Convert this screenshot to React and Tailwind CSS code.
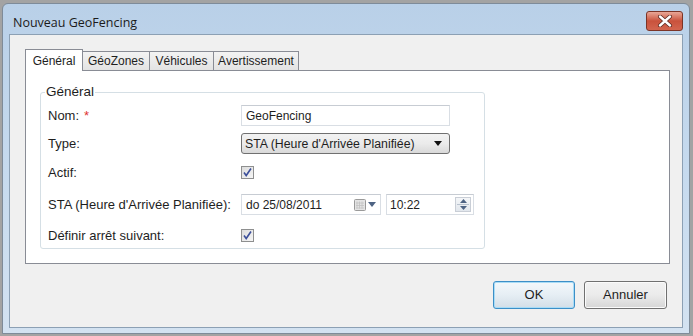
import React from "react";

const labelFont = { fontFamily: '"Liberation Sans", Arial, sans-serif' };

const Checkbox = () => (
  <div className="w-[13px] h-[13px] border border-[#8e8f8f] bg-gradient-to-br from-[#dcdcdc] to-[#f6f6f6] flex items-center justify-center">
    <svg width="11" height="11" viewBox="0 0 11 11">
      <path d="M2 5.5 L4.2 8.5 L9 1.5" fill="none" stroke="#3c4f9a" strokeWidth="1.6" />
    </svg>
  </div>
);

const Row = ({ label, required, className = "", children }) => (
  <div className={`flex items-center h-[21px] text-[12px] ${className}`}>
    <div className="w-[193px] shrink-0 flex items-center text-[13px]">
      <span>{label}</span>
      {required && <span className="text-[#e0322f] ml-[5px]">*</span>}
    </div>
    {children}
  </div>
);

const App = () => {
  const tabs = [
    { name: "Général", w: "w-[58px]", active: true },
    { name: "GéoZones", w: "w-[68px]" },
    { name: "Véhicules", w: "w-[65px]" },
    { name: "Avertissement", w: "w-[86px]" },
  ];

  return (
    <div className="w-[693px] h-[336px] bg-[#a3a3a3] pt-[3px] pl-[2px] pr-[3px] pb-[2px] overflow-hidden" style={labelFont}>
      <div className="h-full rounded-t-[6px] border border-[#7e8b99] bg-gradient-to-b from-[#b9d0e8] via-[#c6daee] to-[#d3e2f1] flex flex-col px-[6px] pb-[5px]">
        {/* Title bar */}
        <div className="h-[30px] flex items-center justify-between shrink-0">
          <span className="text-[12.5px] text-[#1b1b1b] ml-[4px] mt-[8px]" style={{ fontFamily: '"Open Sans", "Noto Sans", sans-serif' }}>
            Nouveau GeoFencing
          </span>
          <div className="w-[37px] h-[20px] mt-[3px] rounded-[3px] border border-[#7c3426] bg-gradient-to-b from-[#e8a797] via-[#c9523c] to-[#d2654f] flex items-center justify-center">
            <svg width="16" height="12" viewBox="0 0 16 12">
              <path d="M3 1.5 L13 10.5 M13 1.5 L3 10.5" stroke="#5c2a22" strokeWidth="4" strokeLinecap="round" />
              <path d="M3 1.5 L13 10.5 M13 1.5 L3 10.5" stroke="#ffffff" strokeWidth="2.4" strokeLinecap="round" />
            </svg>
          </div>
        </div>

        {/* Client area */}
        <div className="flex-1 bg-[#f0f0f0] border border-[#8ca0b4] flex flex-col pl-[15px] pr-[12px] pt-[14px] text-[12px] text-[#1e1e1e]">
          {/* Tabs */}
          <div className="flex items-end h-[21px]">
            {tabs.map((t) =>
              t.active ? (
                <div
                  key={t.name}
                  className={`${t.w} h-[22px] bg-white border border-b-0 border-[#898c95] flex items-center justify-center relative z-10 -mb-px`}
                >
                  {t.name}
                </div>
              ) : (
                <div
                  key={t.name}
                  className={`${t.w} h-[19px] -ml-px bg-gradient-to-b from-[#f3f3f3] to-[#e3e3e3] border border-b-0 border-[#898c95] flex items-center justify-center`}
                >
                  {t.name}
                </div>
              )
            )}
          </div>

          {/* Tab panel */}
          <div className="h-[194px] bg-white border border-[#898c95] pl-[14px] pt-[11px]">
            <fieldset className="w-[445px] h-[167px] border border-[#d5dfe5] rounded-[3px] pl-[4px] pt-[3px]">
              <legend className="px-[1px] text-[13.5px]">Général</legend>
              <div className="pl-[3px] flex flex-col">
                <Row label="Nom:" required>
                  <div className="w-[209px] h-[21px] border border-[#d9dee4] border-t-[#c7ccd3] bg-white flex items-center pl-[4px]">
                    GeoFencing
                  </div>
                </Row>
                <Row label="Type:" className="mt-[7px]">
                  <div className="w-[209px] h-[21px] border border-[#707070] rounded-[3px] bg-gradient-to-b from-[#f2f2f2] via-[#ebebeb] to-[#d9d9d9] flex items-center justify-between pl-[3px] pr-[7px]">
                    <span className="text-[12.3px]">STA (Heure d'Arrivée Planifiée)</span>
                    <svg width="8" height="5" viewBox="0 0 8 5">
                      <path d="M0 0 H8 L4 5 Z" fill="#111" />
                    </svg>
                  </div>
                </Row>
                <Row label="Actif:" className="mt-[8px]">
                  <Checkbox />
                </Row>
                <Row label="STA (Heure d'Arrivée Planifiée):" className="mt-[11px]">
                  <div className="w-[140px] h-[21px] border border-[#d9dee4] border-t-[#c7ccd3] bg-white flex items-center justify-between pl-[4px] pr-[4px]">
                    <span>do 25/08/2011</span>
                    <div className="flex items-center gap-[2px]">
                      <svg width="12" height="12" viewBox="0 0 12 12">
                        <rect x="0.5" y="0.5" width="11" height="11" rx="1" fill="#e4e4e4" stroke="#9a9a9a" />
                        <path d="M3 2.5 V9.5 M5.5 2.5 V9.5 M8 2.5 V9.5 M2 4 H10 M2 6.5 H10 M2 9 H10" stroke="#c2c2c2" strokeWidth="0.8" />
                      </svg>
                      <svg width="8" height="5" viewBox="0 0 8 5">
                        <path d="M0 0 H8 L4 5 Z" fill="#4d6383" />
                      </svg>
                    </div>
                  </div>
                  <div className="w-[88px] h-[21px] ml-[5px] border border-[#d9dee4] border-t-[#c7ccd3] bg-white flex items-center justify-between pl-[3px] pr-[2px]">
                    <span>10:22</span>
                    <div className="w-[16px] h-[15px] border border-[#c9ced6] bg-gradient-to-b from-[#f4f6f8] to-[#e2e7ed] flex flex-col items-center justify-center gap-[1px]">
                      <svg width="7" height="4" viewBox="0 0 7 4">
                        <path d="M0 4 H7 L3.5 0 Z" fill="#4d6383" />
                      </svg>
                      <div className="w-[12px] h-px bg-[#b9c3cf]" />
                      <svg width="7" height="4" viewBox="0 0 7 4">
                        <path d="M0 0 H7 L3.5 4 Z" fill="#4d6383" />
                      </svg>
                    </div>
                  </div>
                </Row>
                <Row label="Définir arrêt suivant:" className="mt-[10px]">
                  <Checkbox />
                </Row>
              </div>
            </fieldset>
          </div>

          {/* Buttons */}
          <div className="flex justify-end gap-[9px] mt-[17px] pr-[3px]">
            <button className="w-[82px] h-[28px] rounded-[3px] border border-[#3c8fc7] bg-gradient-to-b from-[#f3f8fb] via-[#e6eef4] to-[#d3dee7] shadow-[inset_0_0_0_1px_#a9dcf6] text-[13px] text-[#1e1e1e]">
              OK
            </button>
            <button className="w-[83px] h-[28px] rounded-[3px] border border-[#707070] bg-gradient-to-b from-[#f2f2f2] via-[#ebebeb] to-[#d6d6d6] shadow-[inset_0_0_0_1px_#fbfbfb] text-[13px] text-[#1e1e1e]">
              Annuler
            </button>
          </div>
        </div>
      </div>
    </div>
  );
};

export default App;
